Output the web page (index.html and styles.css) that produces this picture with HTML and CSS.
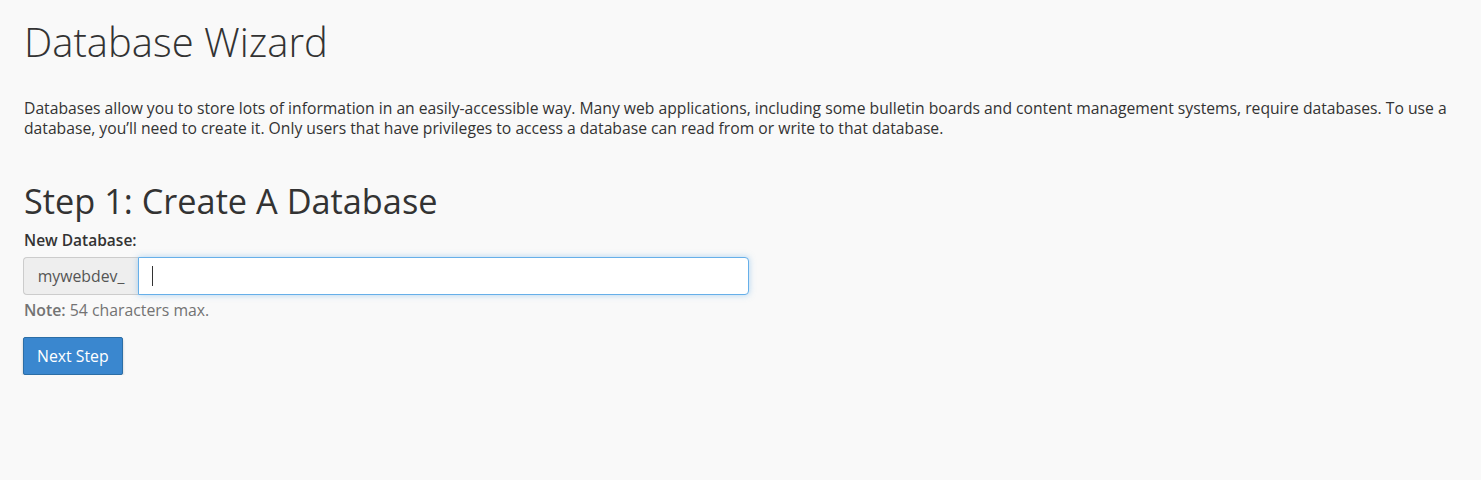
FILE: index.html
```html
<!DOCTYPE html>
<html>
<head>
<meta charset="utf-8">
<link rel="stylesheet" href="styles.css">
</head>
<body>
<div class="page">
  <h1 class="title">Database Wizard</h1>
  <p class="intro">Databases allow you to store lots of information in an easily-accessible way. Many web applications, including some bulletin boards and content management systems, require databases. To use a database, you’ll need to create it. Only users that have privileges to access a database can read from or write to that database.</p>
  <h2 class="step">Step 1: Create A Database</h2>
  <label class="label">New Database:</label>
  <div class="input-group">
    <span class="addon">mywebdev_</span>
    <div class="field"><span class="caret"></span></div>
  </div>
  <div class="note"><b>Note:</b> 54 characters max.</div>
  <button class="btn">Next Step</button>
</div>
</body>
</html>
```

FILE: styles.css
```css
html, body {
  margin: 0;
  padding: 0;
  background: #f9f9f9;
}
body {
  font-family: "Open Sans", "Liberation Sans", sans-serif;
  color: #333;
  font-size: 15.8px;
  line-height: 19px;
}
.page {
  padding: 0 24px 0 23px;
  display: flex;
  flex-direction: column;
  align-items: flex-start;
}
.title {
  font-weight: 300;
  font-size: 40px;
  line-height: 48px;
  margin: 18px 0 0 1px;
}
.intro {
  font-size: 15.7px;
  line-height: 20px;
  margin: 32px 0 0 1px;
}
.step {
  font-weight: 400;
  font-size: 34.3px;
  line-height: 40px;
  margin: 43px 0 0 1px;
}
.label {
  font-weight: 600;
  font-size: 15.5px;
  margin: 10px 0 0 1px;
}
.input-group {
  display: flex;
  margin-top: 7px;
  width: 726px;
  height: 38px;
}
.addon {
  box-sizing: border-box;
  width: 115px;
  background: #eeeeee;
  border: 1px solid #ccc;
  border-right: none;
  border-radius: 4px 0 0 4px;
  color: #555;
  display: flex;
  align-items: center;
  justify-content: center;
}
.field {
  flex: 1;
  box-sizing: border-box;
  background: #fff;
  border: 1px solid #66afe9;
  border-radius: 0 4px 4px 0;
  box-shadow: 0 0 6px rgba(102,175,233,0.5);
  display: flex;
  align-items: center;
  padding-left: 13px;
}
.caret {
  width: 1px;
  height: 20px;
  background: #333;
}
.note {
  color: #737373;
  margin: 6px 0 0 1px;
}
.note b {
  font-weight: 600;
}
.btn {
  margin-top: 17px;
  font-family: inherit;
  font-size: 15.8px;
  color: #fff;
  background: #3a87cf;
  border: 1px solid #2c6ea6;
  border-radius: 2px;
  padding: 8px 13px;
  box-shadow: 0 2px 3px rgba(0,0,0,0.2);
  line-height: 20px;
}
```
